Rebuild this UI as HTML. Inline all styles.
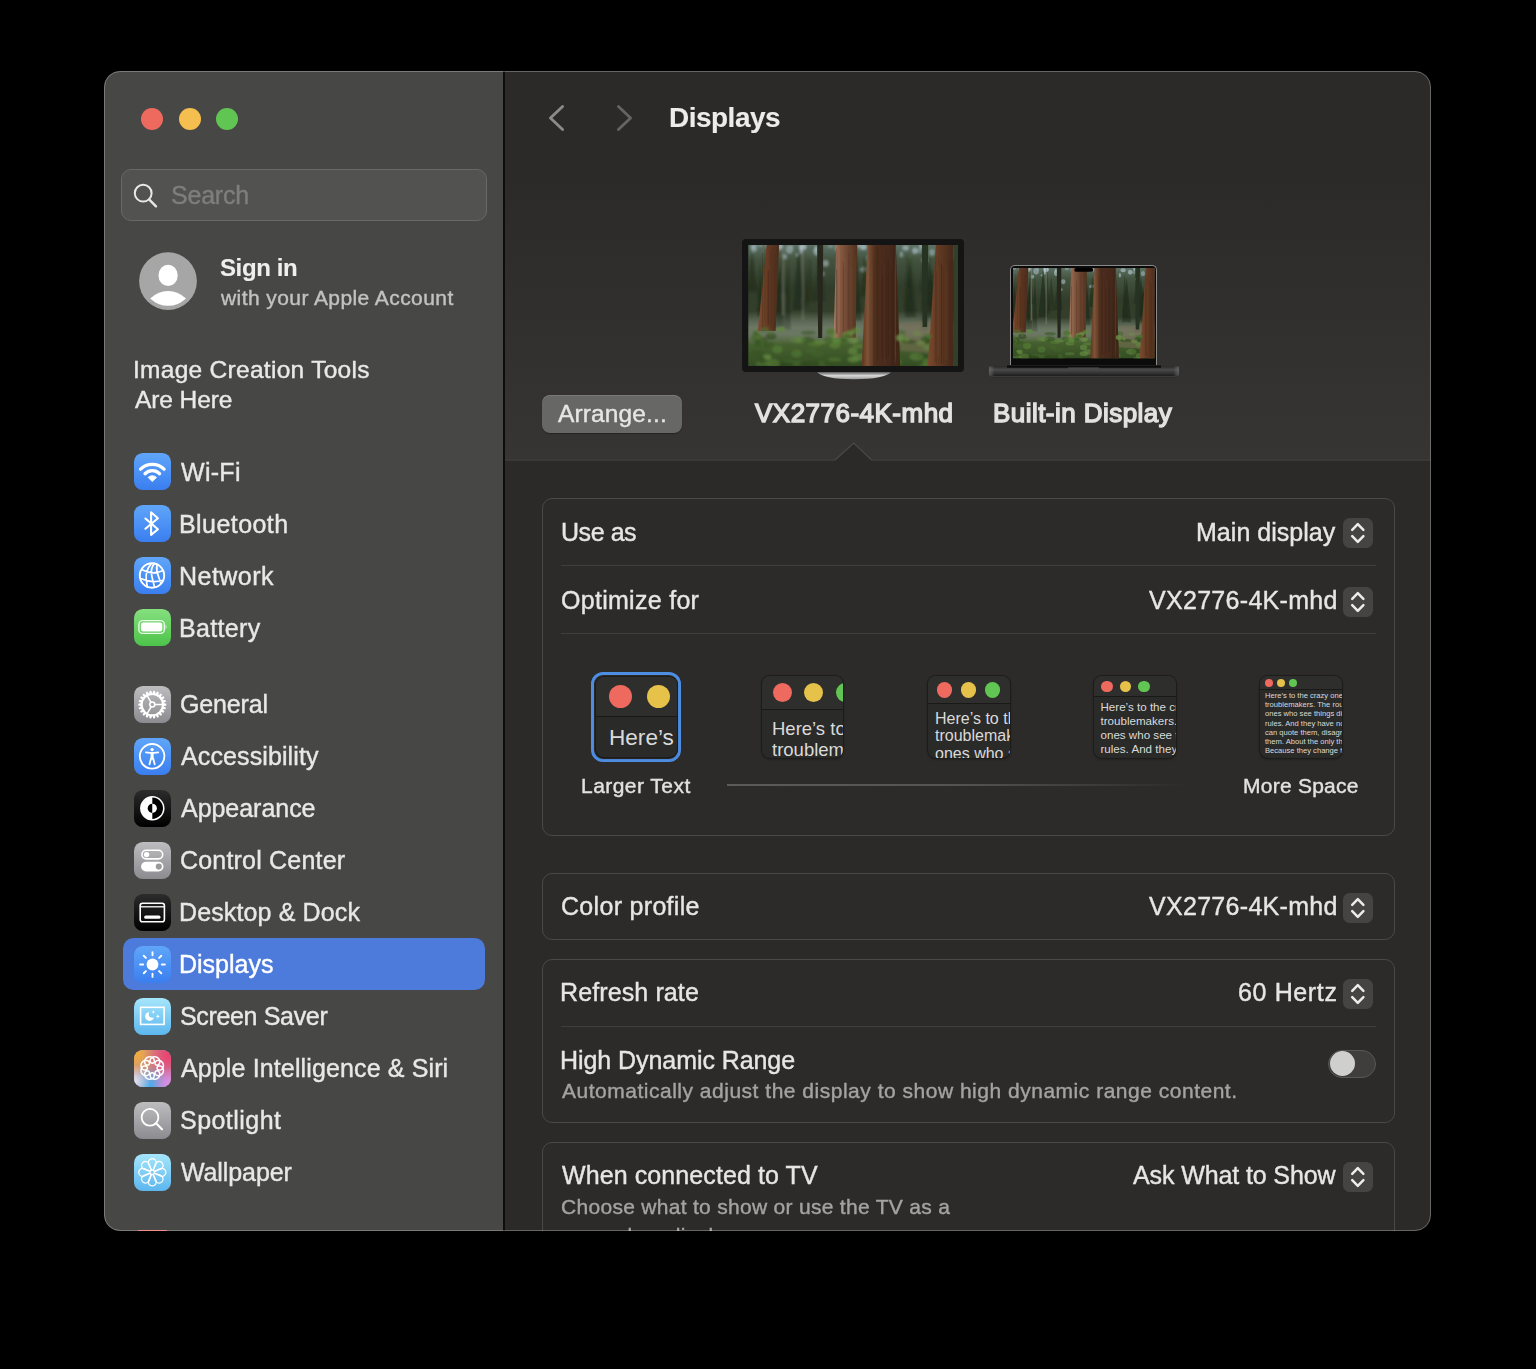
<!DOCTYPE html>
<html><head><meta charset="utf-8"><style>
html,body{margin:0;padding:0;background:#000;width:1536px;height:1369px;overflow:hidden;}
#win{position:absolute;left:0;top:0;width:1536px;height:1369px;clip-path:inset(71px 105px 138px 104px round 16px);}
.t{position:absolute;white-space:nowrap;font-family:'Liberation Sans',sans-serif;will-change:transform;}
svg{display:block}
</style></head><body>
<div id="win"><div style="position:absolute;left:104px;top:71px;width:400px;height:1160px;background:#474745;"></div><div style="position:absolute;left:503px;top:71px;width:2px;height:1160px;background:#0d0d0d;"></div><div style="position:absolute;left:505px;top:71px;width:926px;height:1160px;background:#2b2a28;"></div><div style="position:absolute;left:505px;top:170px;width:926px;height:289px;background:linear-gradient(#2b2a28,#363533);"></div><svg style="position:absolute;left:505px;top:430px" width="926" height="40"><path d="M330.5 30.6 L348.75 13.6 L366 30.6Z" fill="#2b2a28"/><path d="M0 30 H330 L348.75 13 L366.5 30 H926" fill="none" stroke="#4a4947" stroke-width="1.2"/></svg><div style="position:absolute;left:141.2px;top:107.7px;width:22px;height:22px;border-radius:50%;background:#ee6a5f"></div><div style="position:absolute;left:178.6px;top:107.7px;width:22px;height:22px;border-radius:50%;background:#f5bf4f"></div><div style="position:absolute;left:215.7px;top:107.7px;width:22px;height:22px;border-radius:50%;background:#61c554"></div><div style="position:absolute;left:121px;top:169px;width:364px;height:50px;border-radius:10px;background:#525250;border:1px solid #686866;"></div><svg style="position:absolute;left:130px;top:181px" width="30" height="30"><circle cx="13.2" cy="12.2" r="8.4" fill="none" stroke="#e8e8e8" stroke-width="2"/><path d="M19.3 18.6 L26 25.3" stroke="#e8e8e8" stroke-width="2.4" stroke-linecap="round"/></svg><div class="t" style="left:170.80px;top:183.34px;font-size:25px;line-height:25px;color:#7e7e7d;font-weight:400;letter-spacing:-0.222px;-webkit-text-stroke-width:0.4px;">Search</div><svg style="position:absolute;left:139px;top:252px" width="58" height="58"><circle cx="29" cy="29.1" r="28.9" fill="#a6a6a6"/><ellipse cx="29.1" cy="23.4" rx="9.6" ry="10.7" fill="#fff"/><path d="M11.2 46.6 A24.9 24.9 0 0 1 47 46.6 A25.8 25.8 0 0 1 11.2 46.6Z" fill="#fff"/></svg><div class="t" style="left:220.30px;top:255.68px;font-size:24px;line-height:24px;color:#efefef;font-weight:700;letter-spacing:-0.389px;-webkit-text-stroke-width:0.1px;">Sign in</div><div class="t" style="left:221.30px;top:287.22px;font-size:21px;line-height:21px;color:#c2c2c1;font-weight:400;letter-spacing:0.420px;-webkit-text-stroke-width:0.4px;">with your Apple Account</div><div class="t" style="left:132.80px;top:358.06px;font-size:24.5px;line-height:24.5px;color:#e9e9e9;font-weight:400;letter-spacing:0.287px;-webkit-text-stroke-width:0.4px;">Image Creation Tools</div><div class="t" style="left:134.80px;top:388.06px;font-size:24.5px;line-height:24.5px;color:#e9e9e9;font-weight:400;letter-spacing:-0.087px;-webkit-text-stroke-width:0.4px;">Are Here</div><div style="position:absolute;left:122.5px;top:938.3px;width:362.5px;height:51.5px;background:#4d7bdc;border-radius:10.5px;"></div><svg style="position:absolute;left:134px;top:453.0px" width="37" height="37" viewBox="0 0 37 37"><defs><linearGradient id="g1" x1="0" y1="0" x2="0" y2="1"><stop offset="0" stop-color="#5fa6f9"/><stop offset="1" stop-color="#3a7ef0"/></linearGradient></defs><rect x="0" y="0" width="37" height="37" rx="8.8" fill="url(#g1)"/><path d="M6.5 16.2 A16.7 16.7 0 0 1 30.1 16.2" fill="none" stroke="#fff" stroke-linecap="round" stroke-linejoin="round" stroke-width="3.3"/><path d="M11 20.7 A10.4 10.4 0 0 1 25.6 20.7" fill="none" stroke="#fff" stroke-linecap="round" stroke-linejoin="round" stroke-width="3.3"/><path d="M18.3 28.6 L14.1 24.4 A5.9 5.9 0 0 1 22.5 24.4 Z" fill="#fff" stroke="#fff" stroke-width="0.8" stroke-linejoin="round"/></svg><div class="t" style="left:181.20px;top:459.74px;font-size:25px;line-height:25px;color:#e8e8e7;font-weight:400;letter-spacing:0.288px;-webkit-text-stroke-width:0.4px;">Wi-Fi</div><svg style="position:absolute;left:134px;top:505.0px" width="37" height="37" viewBox="0 0 37 37"><defs><linearGradient id="g2" x1="0" y1="0" x2="0" y2="1"><stop offset="0" stop-color="#5fa6f9"/><stop offset="1" stop-color="#3a7ef0"/></linearGradient></defs><rect x="0" y="0" width="37" height="37" rx="8.8" fill="url(#g2)"/><path d="M11.4 13.5 L23.9 24.3 L17.1 29.9 V7.2 L23.9 13.2 L11.4 23.7" fill="none" stroke="#fff" stroke-linecap="round" stroke-linejoin="round" stroke-width="2.1"/></svg><div class="t" style="left:179.20px;top:511.74px;font-size:25px;line-height:25px;color:#e8e8e7;font-weight:400;letter-spacing:0.433px;-webkit-text-stroke-width:0.4px;">Bluetooth</div><svg style="position:absolute;left:134px;top:557.0px" width="37" height="37" viewBox="0 0 37 37"><defs><linearGradient id="g3" x1="0" y1="0" x2="0" y2="1"><stop offset="0" stop-color="#5fa6f9"/><stop offset="1" stop-color="#3a7ef0"/></linearGradient></defs><rect x="0" y="0" width="37" height="37" rx="8.8" fill="url(#g3)"/><circle cx="18" cy="18.5" r="12.2" fill="none" stroke="#fff" stroke-linecap="round" stroke-linejoin="round" stroke-width="1.9"/><path d="M8.1 12.8 Q18.5 18.6 29 13.6 M6.6 21.5 Q18 26.5 28.2 23.5 M17.3 6.6 Q11 14 12.3 22.8 Q12.8 27 13.4 30.2 M20.2 6.5 Q16.6 12 17.5 17.1 Q18.3 22 20.6 30.3 M22.9 7.2 Q22 14 24.9 20.7 Q26 23.5 26.8 26.5" fill="none" stroke="#fff" stroke-linecap="round" stroke-linejoin="round" stroke-width="1.7"/></svg><div class="t" style="left:179.20px;top:563.74px;font-size:25px;line-height:25px;color:#e8e8e7;font-weight:400;letter-spacing:0.469px;-webkit-text-stroke-width:0.4px;">Network</div><svg style="position:absolute;left:134px;top:609.0px" width="37" height="37" viewBox="0 0 37 37"><defs><linearGradient id="g4" x1="0" y1="0" x2="0" y2="1"><stop offset="0" stop-color="#86e07f"/><stop offset="1" stop-color="#4cc349"/></linearGradient></defs><rect x="0" y="0" width="37" height="37" rx="8.8" fill="url(#g4)"/><rect x="4.9" y="11.6" width="25.4" height="12.8" rx="3.6" fill="none" stroke="#fff" stroke-opacity=".85" stroke-width="1.4"/><rect x="6.9" y="13.5" width="21.4" height="9" rx="2.2" fill="#fff"/><path d="M31.6 15.6 Q33.5 18 31.6 20.4Z" fill="#fff" fill-opacity=".85"/></svg><div class="t" style="left:179.20px;top:615.74px;font-size:25px;line-height:25px;color:#e8e8e7;font-weight:400;letter-spacing:0.350px;-webkit-text-stroke-width:0.4px;">Battery</div><svg style="position:absolute;left:134px;top:685.5px" width="37" height="37" viewBox="0 0 37 37"><defs><linearGradient id="g5" x1="0" y1="0" x2="0" y2="1"><stop offset="0" stop-color="#bdbdc0"/><stop offset="1" stop-color="#8c8c90"/></linearGradient></defs><rect x="0" y="0" width="37" height="37" rx="8.8" fill="url(#g5)"/><path d="M29.39 17.01 L32.28 17.80 L32.28 19.40 L29.39 20.19 L29.39 20.20 L31.94 21.77 L31.49 23.30 L28.49 23.25 L28.49 23.25 L30.49 25.48 L29.63 26.83 L26.77 25.93 L26.76 25.94 L28.06 28.64 L26.85 29.69 L24.36 28.02 L24.35 28.02 L24.83 30.98 L23.38 31.65 L21.46 29.35 L21.45 29.35 L21.08 32.32 L19.50 32.55 L18.30 29.80 L18.30 29.80 L17.10 32.55 L15.52 32.32 L15.15 29.35 L15.14 29.35 L13.22 31.65 L11.77 30.98 L12.25 28.02 L12.24 28.02 L9.75 29.69 L8.54 28.64 L9.84 25.94 L9.83 25.93 L6.97 26.83 L6.11 25.48 L8.11 23.25 L8.11 23.25 L5.11 23.30 L4.66 21.77 L7.21 20.20 L7.21 20.19 L4.32 19.40 L4.32 17.80 L7.21 17.01 L7.21 17.00 L4.66 15.43 L5.11 13.90 L8.11 13.95 L8.11 13.95 L6.11 11.72 L6.97 10.37 L9.83 11.27 L9.84 11.26 L8.54 8.56 L9.75 7.51 L12.24 9.18 L12.25 9.18 L11.77 6.22 L13.22 5.55 L15.14 7.85 L15.15 7.85 L15.52 4.88 L17.10 4.65 L18.30 7.40 L18.30 7.40 L19.50 4.65 L21.08 4.88 L21.45 7.85 L21.46 7.85 L23.38 5.55 L24.83 6.22 L24.35 9.18 L24.36 9.18 L26.85 7.51 L28.06 8.56 L26.76 11.26 L26.77 11.27 L29.63 10.37 L30.49 11.72 L28.49 13.95 L28.49 13.95 L31.49 13.90 L31.94 15.43 L29.39 17.00Z M27.90 18.6 A9.6 9.6 0 1 0 8.70 18.6 A9.6 9.6 0 1 0 27.90 18.6Z" fill="#fff" fill-rule="evenodd"/><circle cx="18.3" cy="18.6" r="2.5" fill="none" stroke="#fff" stroke-linecap="round" stroke-linejoin="round" stroke-width="1.5"/><path d="M20.8 18.6 H28.3 M17.05 16.43 L13.3 9.940000000000001 M17.05 20.770000000000003 L13.3 27.26" fill="none" stroke="#fff" stroke-linecap="round" stroke-linejoin="round" stroke-width="1.5"/></svg><div class="t" style="left:180.20px;top:692.24px;font-size:25px;line-height:25px;color:#e8e8e7;font-weight:400;letter-spacing:-0.164px;-webkit-text-stroke-width:0.4px;">General</div><svg style="position:absolute;left:134px;top:737.5px" width="37" height="37" viewBox="0 0 37 37"><defs><linearGradient id="g6" x1="0" y1="0" x2="0" y2="1"><stop offset="0" stop-color="#5fa6f9"/><stop offset="1" stop-color="#3a7ef0"/></linearGradient></defs><rect x="0" y="0" width="37" height="37" rx="8.8" fill="url(#g6)"/><circle cx="18.1" cy="18.3" r="12.3" fill="none" stroke="#fff" stroke-linecap="round" stroke-linejoin="round" stroke-width="1.8"/><circle cx="18.1" cy="11.6" r="1.7" fill="#fff"/><path d="M12 14.4 L18.1 15.2 L24.2 14.4" fill="none" stroke="#fff" stroke-linecap="round" stroke-linejoin="round" stroke-width="1.8"/><path d="M18.1 15.2 V20.2" fill="none" stroke="#fff" stroke-linecap="round" stroke-linejoin="round" stroke-width="3"/><path d="M17 20.5 L15.5 26.3 M19.2 20.5 L20.7 26.3" fill="none" stroke="#fff" stroke-linecap="round" stroke-linejoin="round" stroke-width="1.8"/></svg><div class="t" style="left:181.20px;top:744.24px;font-size:25px;line-height:25px;color:#e8e8e7;font-weight:400;letter-spacing:0.113px;-webkit-text-stroke-width:0.4px;">Accessibility</div><svg style="position:absolute;left:134px;top:789.5px" width="37" height="37" viewBox="0 0 37 37"><defs><linearGradient id="g7" x1="0" y1="0" x2="0" y2="1"><stop offset="0" stop-color="#2c2c2c"/><stop offset="1" stop-color="#000000"/></linearGradient></defs><rect x="0" y="0" width="37" height="37" rx="8.8" fill="url(#g7)"/><circle cx="18.3" cy="18.3" r="12.2" fill="#fff"/><path d="M18.3 7.6 A10.7 10.7 0 0 1 18.3 29 Z" fill="#000"/><path d="M18.3 13.7 A4.6 4.6 0 0 0 18.3 22.9 Z" fill="#000"/><path d="M18.3 13.7 A4.6 4.6 0 0 1 18.3 22.9 Z" fill="#fff"/></svg><div class="t" style="left:181.20px;top:796.24px;font-size:25px;line-height:25px;color:#e8e8e7;font-weight:400;letter-spacing:-0.036px;-webkit-text-stroke-width:0.4px;">Appearance</div><svg style="position:absolute;left:134px;top:841.5px" width="37" height="37" viewBox="0 0 37 37"><defs><linearGradient id="g8" x1="0" y1="0" x2="0" y2="1"><stop offset="0" stop-color="#bdbdc0"/><stop offset="1" stop-color="#8c8c90"/></linearGradient></defs><rect x="0" y="0" width="37" height="37" rx="8.8" fill="url(#g8)"/><rect x="7.9" y="8.3" width="20.8" height="8.6" rx="4.3" fill="none" stroke="#fff" stroke-width="1.6"/><circle cx="12.6" cy="12.6" r="2.7" fill="#fff"/><rect x="7.1" y="19.7" width="22.4" height="9.8" rx="4.9" fill="#fff"/><circle cx="24.8" cy="24.6" r="3.05" fill="#9a9a9c"/></svg><div class="t" style="left:180.20px;top:848.24px;font-size:25px;line-height:25px;color:#e8e8e7;font-weight:400;letter-spacing:0.196px;-webkit-text-stroke-width:0.4px;">Control Center</div><svg style="position:absolute;left:134px;top:893.5px" width="37" height="37" viewBox="0 0 37 37"><defs><linearGradient id="g9" x1="0" y1="0" x2="0" y2="1"><stop offset="0" stop-color="#2c2c2c"/><stop offset="1" stop-color="#000000"/></linearGradient></defs><rect x="0" y="0" width="37" height="37" rx="8.8" fill="url(#g9)"/><rect x="6.2" y="9.3" width="24.2" height="18.4" rx="2.3" fill="none" stroke="#fff" stroke-width="1.6"/><path d="M6.2 12.8 H30.4" stroke="#fff" stroke-width="1.3"/><rect x="10.2" y="21.4" width="16.3" height="3.4" rx="1.5" fill="#fff"/></svg><div class="t" style="left:179.20px;top:900.24px;font-size:25px;line-height:25px;color:#e8e8e7;font-weight:400;letter-spacing:0.128px;-webkit-text-stroke-width:0.4px;">Desktop &amp; Dock</div><svg style="position:absolute;left:134px;top:945.5px" width="37" height="37" viewBox="0 0 37 37"><defs><linearGradient id="g10" x1="0" y1="0" x2="0" y2="1"><stop offset="0" stop-color="#5fa6f9"/><stop offset="1" stop-color="#3a7ef0"/></linearGradient></defs><rect x="0" y="0" width="37" height="37" rx="8.8" fill="url(#g10)"/><circle cx="18.5" cy="18.5" r="5.9" fill="#fff"/><path d="M27.80 18.50 L30.90 18.50 M25.08 25.08 L27.27 27.27 M18.50 27.80 L18.50 30.90 M11.92 25.08 L9.73 27.27 M9.20 18.50 L6.10 18.50 M11.92 11.92 L9.73 9.73 M18.50 9.20 L18.50 6.10 M25.08 11.92 L27.27 9.73 " fill="none" stroke="#fff" stroke-linecap="round" stroke-linejoin="round" stroke-width="1.9"/></svg><div class="t" style="left:179.20px;top:952.24px;font-size:25px;line-height:25px;color:#ffffff;font-weight:400;letter-spacing:-0.010px;-webkit-text-stroke-width:0.4px;">Displays</div><svg style="position:absolute;left:134px;top:997.5px" width="37" height="37" viewBox="0 0 37 37"><defs><linearGradient id="g12" x1="0" y1="0" x2="0" y2="1"><stop offset="0" stop-color="#a6e6fb"/><stop offset="1" stop-color="#5cb6ee"/></linearGradient><mask id="mm11"><rect width="37" height="37" fill="#fff"/><circle cx="18.6" cy="15.9" r="3.9" fill="#000"/></mask></defs><rect x="0" y="0" width="37" height="37" rx="8.8" fill="url(#g12)"/><rect x="6.6" y="9.3" width="23.5" height="17.1" fill="none" stroke="#fff" stroke-width="1.6"/><circle cx="15.6" cy="18.4" r="4.5" fill="#fff" mask="url(#mm11)"/><path d="M19.3 12 L19.8 13.4 L21.2 13.9 L19.8 14.4 L19.3 15.8 L18.8 14.4 L17.4 13.9 L18.8 13.4Z" fill="#fff"/><path d="M23.8 16.2 L24.4 17.7 L25.9 18.3 L24.4 18.9 L23.8 20.4 L23.2 18.9 L21.7 18.3 L23.2 17.7Z" fill="#fff"/></svg><div class="t" style="left:180.20px;top:1004.24px;font-size:25px;line-height:25px;color:#e8e8e7;font-weight:400;letter-spacing:-0.340px;-webkit-text-stroke-width:0.4px;">Screen Saver</div><svg style="position:absolute;left:134px;top:1049.5px" width="37" height="37" viewBox="0 0 37 37"><defs><linearGradient id="g14" x1="0" y1="0" x2="0" y2="1"><stop offset="0" stop-color="#e0a090"/><stop offset="1" stop-color="#b090e0"/></linearGradient><radialGradient id="ai13a" cx="0.05" cy="0.1" r="0.75"><stop offset="0" stop-color="#f5ae35"/><stop offset="1" stop-color="#f5ae35" stop-opacity="0"/></radialGradient><radialGradient id="ai13b" cx="0.95" cy="0.15" r="0.7"><stop offset="0" stop-color="#f23d6b"/><stop offset="1" stop-color="#f23d6b" stop-opacity="0"/></radialGradient><radialGradient id="ai13c" cx="0.4" cy="1" r="0.55"><stop offset="0" stop-color="#3fb0f8"/><stop offset="1" stop-color="#3fb0f8" stop-opacity="0"/></radialGradient><radialGradient id="ai13d" cx="1" cy="0.95" r="0.5"><stop offset="0" stop-color="#e68cf8"/><stop offset="1" stop-color="#e68cf8" stop-opacity="0"/></radialGradient><radialGradient id="ai13e" cx="0" cy="0.85" r="0.45"><stop offset="0" stop-color="#e8e8f0"/><stop offset="1" stop-color="#e8e8f0" stop-opacity="0"/></radialGradient></defs><rect x="0" y="0" width="37" height="37" rx="8.8" fill="url(#g14)"/><rect width="37" height="37" rx="8.8" fill="#b68aa6"/><rect width="37" height="37" rx="8.8" fill="url(#ai13a)"/><rect width="37" height="37" rx="8.8" fill="url(#ai13b)"/><rect width="37" height="37" rx="8.8" fill="url(#ai13c)"/><rect width="37" height="37" rx="8.8" fill="url(#ai13d)"/><rect width="37" height="37" rx="8.8" fill="url(#ai13e)"/><path d="M23.01 18.00 L23.05 17.65 L23.14 17.30 L23.31 16.97 L23.53 16.68 L23.81 16.41 L24.14 16.20 L24.51 16.03 L24.92 15.92 L25.36 15.88 L25.81 15.90 L26.27 15.98 L26.73 16.14 L27.19 16.36 L27.62 16.64 L28.02 16.99 L28.38 17.40 L28.70 17.86 L28.97 18.37 L29.17 18.91 L29.32 19.49 L29.39 20.08 L29.40 20.69 L29.33 21.29 L29.20 21.89 L29.00 22.47 L28.73 23.03 L28.40 23.54 L28.02 24.02 L27.59 24.44 L27.11 24.81 L26.60 25.11 L26.07 25.35 L25.53 25.52 L24.98 25.62 L24.43 25.65 L23.90 25.62 L23.39 25.52 L22.92 25.35 L22.48 25.14 L22.09 24.87 L21.76 24.56 L21.48 24.22 L21.27 23.86 L21.13 23.47 L21.05 23.09 L21.03 22.71 L21.09 22.34 L21.20 21.99 L21.38 21.68 L21.60 21.40 L21.88 21.18 L22.19 21.00 L22.54 20.89 L22.91 20.83 L23.29 20.85 L23.67 20.93 L24.06 21.07 L24.42 21.28 L24.76 21.56 L25.07 21.89 L25.34 22.28 L25.55 22.72 L25.72 23.19 L25.82 23.70 L25.85 24.23 L25.82 24.78 L25.72 25.33 L25.55 25.87 L25.31 26.40 L25.01 26.91 L24.64 27.39 L24.22 27.82 L23.74 28.20 L23.23 28.53 L22.67 28.80 L22.09 29.00 L21.49 29.13 L20.89 29.20 L20.28 29.19 L19.69 29.12 L19.11 28.97 L18.57 28.77 L18.06 28.50 L17.60 28.18 L17.19 27.82 L16.84 27.42 L16.56 26.99 L16.34 26.53 L16.18 26.07 L16.10 25.61 L16.08 25.16 L16.12 24.72 L16.23 24.31 L16.40 23.94 L16.61 23.61 L16.88 23.33 L17.17 23.11 L17.50 22.94 L17.85 22.85 L18.20 22.81 L18.55 22.85 L18.90 22.94 L19.23 23.11 L19.52 23.33 L19.79 23.61 L20.00 23.94 L20.17 24.31 L20.28 24.72 L20.32 25.16 L20.30 25.61 L20.22 26.07 L20.06 26.53 L19.84 26.99 L19.56 27.42 L19.21 27.82 L18.80 28.18 L18.34 28.50 L17.83 28.77 L17.29 28.97 L16.71 29.12 L16.12 29.19 L15.51 29.20 L14.91 29.13 L14.31 29.00 L13.73 28.80 L13.17 28.53 L12.66 28.20 L12.18 27.82 L11.76 27.39 L11.39 26.91 L11.09 26.40 L10.85 25.87 L10.68 25.33 L10.58 24.78 L10.55 24.23 L10.58 23.70 L10.68 23.19 L10.85 22.72 L11.06 22.28 L11.33 21.89 L11.64 21.56 L11.98 21.28 L12.34 21.07 L12.73 20.93 L13.11 20.85 L13.49 20.83 L13.86 20.89 L14.21 21.00 L14.52 21.18 L14.80 21.40 L15.02 21.68 L15.20 21.99 L15.31 22.34 L15.37 22.71 L15.35 23.09 L15.27 23.47 L15.13 23.86 L14.92 24.22 L14.64 24.56 L14.31 24.87 L13.92 25.14 L13.48 25.35 L13.01 25.52 L12.50 25.62 L11.97 25.65 L11.42 25.62 L10.87 25.52 L10.33 25.35 L9.80 25.11 L9.29 24.81 L8.81 24.44 L8.38 24.02 L8.00 23.54 L7.67 23.03 L7.40 22.47 L7.20 21.89 L7.07 21.29 L7.00 20.69 L7.01 20.08 L7.08 19.49 L7.23 18.91 L7.43 18.37 L7.70 17.86 L8.02 17.40 L8.38 16.99 L8.78 16.64 L9.21 16.36 L9.67 16.14 L10.13 15.98 L10.59 15.90 L11.04 15.88 L11.48 15.92 L11.89 16.03 L12.26 16.20 L12.59 16.41 L12.87 16.68 L13.09 16.97 L13.26 17.30 L13.35 17.65 L13.39 18.00 L13.35 18.35 L13.26 18.70 L13.09 19.03 L12.87 19.32 L12.59 19.59 L12.26 19.80 L11.89 19.97 L11.48 20.08 L11.04 20.12 L10.59 20.10 L10.13 20.02 L9.67 19.86 L9.21 19.64 L8.78 19.36 L8.38 19.01 L8.02 18.60 L7.70 18.14 L7.43 17.63 L7.23 17.09 L7.08 16.51 L7.01 15.92 L7.00 15.31 L7.07 14.71 L7.20 14.11 L7.40 13.53 L7.67 12.97 L8.00 12.46 L8.38 11.98 L8.81 11.56 L9.29 11.19 L9.80 10.89 L10.33 10.65 L10.87 10.48 L11.42 10.38 L11.97 10.35 L12.50 10.38 L13.01 10.48 L13.48 10.65 L13.92 10.86 L14.31 11.13 L14.64 11.44 L14.92 11.78 L15.13 12.14 L15.27 12.53 L15.35 12.91 L15.37 13.29 L15.31 13.66 L15.20 14.01 L15.02 14.32 L14.80 14.60 L14.52 14.82 L14.21 15.00 L13.86 15.11 L13.49 15.17 L13.11 15.15 L12.73 15.07 L12.34 14.93 L11.98 14.72 L11.64 14.44 L11.33 14.11 L11.06 13.72 L10.85 13.28 L10.68 12.81 L10.58 12.30 L10.55 11.77 L10.58 11.22 L10.68 10.67 L10.85 10.13 L11.09 9.60 L11.39 9.09 L11.76 8.61 L12.18 8.18 L12.66 7.80 L13.17 7.47 L13.73 7.20 L14.31 7.00 L14.91 6.87 L15.51 6.80 L16.12 6.81 L16.71 6.88 L17.29 7.03 L17.83 7.23 L18.34 7.50 L18.80 7.82 L19.21 8.18 L19.56 8.58 L19.84 9.01 L20.06 9.47 L20.22 9.93 L20.30 10.39 L20.32 10.84 L20.28 11.28 L20.17 11.69 L20.00 12.06 L19.79 12.39 L19.52 12.67 L19.23 12.89 L18.90 13.06 L18.55 13.15 L18.20 13.19 L17.85 13.15 L17.50 13.06 L17.17 12.89 L16.88 12.67 L16.61 12.39 L16.40 12.06 L16.23 11.69 L16.12 11.28 L16.08 10.84 L16.10 10.39 L16.18 9.93 L16.34 9.47 L16.56 9.01 L16.84 8.58 L17.19 8.18 L17.60 7.82 L18.06 7.50 L18.57 7.23 L19.11 7.03 L19.69 6.88 L20.28 6.81 L20.89 6.80 L21.49 6.87 L22.09 7.00 L22.67 7.20 L23.23 7.47 L23.74 7.80 L24.22 8.18 L24.64 8.61 L25.01 9.09 L25.31 9.60 L25.55 10.13 L25.72 10.67 L25.82 11.22 L25.85 11.77 L25.82 12.30 L25.72 12.81 L25.55 13.28 L25.34 13.72 L25.07 14.11 L24.76 14.44 L24.42 14.72 L24.06 14.93 L23.67 15.07 L23.29 15.15 L22.91 15.17 L22.54 15.11 L22.19 15.00 L21.88 14.82 L21.60 14.60 L21.38 14.32 L21.20 14.01 L21.09 13.66 L21.03 13.29 L21.05 12.91 L21.13 12.53 L21.27 12.14 L21.48 11.78 L21.76 11.44 L22.09 11.13 L22.48 10.86 L22.92 10.65 L23.39 10.48 L23.90 10.38 L24.43 10.35 L24.98 10.38 L25.53 10.48 L26.07 10.65 L26.60 10.89 L27.11 11.19 L27.59 11.56 L28.02 11.98 L28.40 12.46 L28.73 12.97 L29.00 13.53 L29.20 14.11 L29.33 14.71 L29.40 15.31 L29.39 15.92 L29.32 16.51 L29.17 17.09 L28.97 17.63 L28.70 18.14 L28.38 18.60 L28.02 19.01 L27.62 19.36 L27.19 19.64 L26.73 19.86 L26.27 20.02 L25.81 20.10 L25.36 20.12 L24.92 20.08 L24.51 19.97 L24.14 19.80 L23.81 19.59 L23.53 19.32 L23.31 19.03 L23.14 18.70 L23.05 18.35 L23.01 18.00Z" fill="none" stroke="#fff" stroke-width="1.5" stroke-linejoin="round"/></svg><div class="t" style="left:181.20px;top:1056.24px;font-size:25px;line-height:25px;color:#e8e8e7;font-weight:400;letter-spacing:0.130px;-webkit-text-stroke-width:0.4px;">Apple Intelligence &amp; Siri</div><svg style="position:absolute;left:134px;top:1101.5px" width="37" height="37" viewBox="0 0 37 37"><defs><linearGradient id="g15" x1="0" y1="0" x2="0" y2="1"><stop offset="0" stop-color="#bdbdc0"/><stop offset="1" stop-color="#8c8c90"/></linearGradient></defs><rect x="0" y="0" width="37" height="37" rx="8.8" fill="url(#g15)"/><circle cx="16" cy="15.3" r="8.4" fill="none" stroke="#fff" stroke-linecap="round" stroke-linejoin="round" stroke-width="1.8"/><path d="M22 21.3 L28 27.3" fill="none" stroke="#fff" stroke-linecap="round" stroke-linejoin="round" stroke-width="2.1"/></svg><div class="t" style="left:180.20px;top:1108.24px;font-size:25px;line-height:25px;color:#e8e8e7;font-weight:400;letter-spacing:0.457px;-webkit-text-stroke-width:0.4px;">Spotlight</div><svg style="position:absolute;left:134px;top:1153.5px" width="37" height="37" viewBox="0 0 37 37"><defs><linearGradient id="g16" x1="0" y1="0" x2="0" y2="1"><stop offset="0" stop-color="#a6e6fb"/><stop offset="1" stop-color="#5cb6ee"/></linearGradient></defs><rect x="0" y="0" width="37" height="37" rx="8.8" fill="url(#g16)"/><path d="M18.3 18.3 L14.67 10.36 A4 4 0 1 1 21.93 10.36 Z" transform="rotate(0.0 18.3 18.3)" fill="none" stroke="#fff" stroke-width="1.25" stroke-linejoin="round"/><path d="M18.3 18.3 L14.67 10.36 A4 4 0 1 1 21.93 10.36 Z" transform="rotate(45.0 18.3 18.3)" fill="none" stroke="#fff" stroke-width="1.25" stroke-linejoin="round"/><path d="M18.3 18.3 L14.67 10.36 A4 4 0 1 1 21.93 10.36 Z" transform="rotate(90.0 18.3 18.3)" fill="none" stroke="#fff" stroke-width="1.25" stroke-linejoin="round"/><path d="M18.3 18.3 L14.67 10.36 A4 4 0 1 1 21.93 10.36 Z" transform="rotate(135.0 18.3 18.3)" fill="none" stroke="#fff" stroke-width="1.25" stroke-linejoin="round"/><path d="M18.3 18.3 L14.67 10.36 A4 4 0 1 1 21.93 10.36 Z" transform="rotate(180.0 18.3 18.3)" fill="none" stroke="#fff" stroke-width="1.25" stroke-linejoin="round"/><path d="M18.3 18.3 L14.67 10.36 A4 4 0 1 1 21.93 10.36 Z" transform="rotate(225.0 18.3 18.3)" fill="none" stroke="#fff" stroke-width="1.25" stroke-linejoin="round"/><path d="M18.3 18.3 L14.67 10.36 A4 4 0 1 1 21.93 10.36 Z" transform="rotate(270.0 18.3 18.3)" fill="none" stroke="#fff" stroke-width="1.25" stroke-linejoin="round"/><path d="M18.3 18.3 L14.67 10.36 A4 4 0 1 1 21.93 10.36 Z" transform="rotate(315.0 18.3 18.3)" fill="none" stroke="#fff" stroke-width="1.25" stroke-linejoin="round"/><circle cx="18.3" cy="18.3" r="2.2" fill="#7cc6f2" stroke="#fff" stroke-width="1.3"/></svg><div class="t" style="left:181.20px;top:1160.24px;font-size:25px;line-height:25px;color:#e8e8e7;font-weight:400;letter-spacing:-0.099px;-webkit-text-stroke-width:0.4px;">Wallpaper</div><svg style="position:absolute;left:540px;top:98px" width="100" height="40"><path d="M22.6 8.4 L10.4 20 L22.6 31.6" fill="none" stroke="#8b8b8a" stroke-width="2.8" stroke-linecap="round" stroke-linejoin="round"/><path d="M78.4 8.4 L90.6 20 L78.4 31.6" fill="none" stroke="#646463" stroke-width="2.8" stroke-linecap="round" stroke-linejoin="round"/></svg><div class="t" style="left:669.00px;top:104.10px;font-size:28px;line-height:28px;color:#ececeb;font-weight:700;letter-spacing:-0.514px;-webkit-text-stroke-width:0.1px;">Displays</div><svg style="position:absolute;left:0;top:0" width="0" height="0"><symbol id="forest" viewBox="0 0 210 121" overflow="hidden"><defs><filter id="fblur" x="-5%" y="-5%" width="110%" height="110%"><feGaussianBlur stdDeviation="1"/></filter><filter id="fblur2"><feGaussianBlur stdDeviation="0.4"/></filter><linearGradient id="fbg" x1="0" y1="0" x2="0" y2="1"><stop offset="0" stop-color="#5c7064"/><stop offset="0.12" stop-color="#43533f"/><stop offset="0.35" stop-color="#313d2a"/><stop offset="0.55" stop-color="#333f2a"/><stop offset="0.64" stop-color="#4c5944"/><stop offset="0.74" stop-color="#5e6b52"/><stop offset="0.82" stop-color="#46602f"/><stop offset="1" stop-color="#344e24"/></linearGradient><linearGradient id="trkA" x1="0" y1="0" x2="1" y2="0"><stop offset="0" stop-color="#7e4c32"/><stop offset="0.4" stop-color="#683c26"/><stop offset="1" stop-color="#4a2c1c"/></linearGradient><linearGradient id="trkC" x1="0" y1="0" x2="1" y2="0"><stop offset="0" stop-color="#5a3522"/><stop offset="0.15" stop-color="#7e5236"/><stop offset="0.35" stop-color="#4e2e1e"/><stop offset="1" stop-color="#3e2618"/></linearGradient><linearGradient id="trkB" x1="0" y1="0" x2="1" y2="0"><stop offset="0" stop-color="#a88068"/><stop offset="0.3" stop-color="#845840"/><stop offset="1" stop-color="#50301e"/></linearGradient><linearGradient id="trkD" x1="0" y1="0" x2="1" y2="0"><stop offset="0" stop-color="#7a4a2e"/><stop offset="0.5" stop-color="#5e3722"/><stop offset="1" stop-color="#43281a"/></linearGradient><linearGradient id="mist" x1="0" y1="0" x2="0" y2="1"><stop offset="0" stop-color="#8a9688" stop-opacity="0"/><stop offset="0.5" stop-color="#8a9688" stop-opacity=".45"/><stop offset="1" stop-color="#8a9688" stop-opacity="0"/></linearGradient></defs><rect width="210" height="121" fill="url(#fbg)"/><g filter="url(#fblur)"><ellipse cx="68.0" cy="3.3" rx="1.4" ry="3.4" fill="#c0d4de" opacity="0.41"/><ellipse cx="12.2" cy="0.6" rx="2.4" ry="1.7" fill="#c0d4de" opacity="0.33"/><ellipse cx="89.1" cy="3.5" rx="1.8" ry="3.7" fill="#c0d4de" opacity="0.58"/><ellipse cx="121.2" cy="13.2" rx="1.3" ry="4.5" fill="#c0d4de" opacity="0.39"/><ellipse cx="30.3" cy="1.2" rx="3.5" ry="2.1" fill="#c0d4de" opacity="0.47"/><ellipse cx="134.2" cy="6.9" rx="1.4" ry="1.7" fill="#c0d4de" opacity="0.36"/><ellipse cx="142.9" cy="4.6" rx="2.8" ry="3.1" fill="#c0d4de" opacity="0.39"/><ellipse cx="166.8" cy="5.8" rx="2.8" ry="3.3" fill="#c0d4de" opacity="0.56"/><ellipse cx="153.2" cy="9.6" rx="1.5" ry="3.0" fill="#c0d4de" opacity="0.53"/><ellipse cx="31.9" cy="0.7" rx="3.1" ry="4.2" fill="#c0d4de" opacity="0.47"/><ellipse cx="183.9" cy="7.4" rx="2.9" ry="3.5" fill="#c0d4de" opacity="0.44"/><ellipse cx="176.4" cy="15.2" rx="3.1" ry="1.7" fill="#c0d4de" opacity="0.51"/><ellipse cx="135.9" cy="27.8" rx="2.0" ry="2.9" fill="#c0d4de" opacity="0.50"/><ellipse cx="4.7" cy="2.6" rx="1.5" ry="1.7" fill="#c0d4de" opacity="0.53"/><ellipse cx="27.2" cy="3.3" rx="3.6" ry="1.8" fill="#c0d4de" opacity="0.43"/><ellipse cx="115.4" cy="24.6" rx="3.6" ry="2.5" fill="#c0d4de" opacity="0.42"/><ellipse cx="75.3" cy="28.8" rx="1.6" ry="2.1" fill="#c0d4de" opacity="0.37"/><ellipse cx="49.0" cy="9.7" rx="1.9" ry="1.5" fill="#c0d4de" opacity="0.43"/><ellipse cx="77.5" cy="18.4" rx="3.1" ry="3.3" fill="#c0d4de" opacity="0.49"/><ellipse cx="142.0" cy="1.7" rx="3.4" ry="4.6" fill="#c0d4de" opacity="0.54"/><ellipse cx="82.4" cy="1.4" rx="3.0" ry="1.7" fill="#c0d4de" opacity="0.32"/><ellipse cx="43.8" cy="1.9" rx="1.3" ry="1.5" fill="#c0d4de" opacity="0.35"/><ellipse cx="21.3" cy="0.3" rx="3.6" ry="3.6" fill="#c0d4de" opacity="0.34"/><ellipse cx="53.0" cy="4.3" rx="1.5" ry="4.5" fill="#c0d4de" opacity="0.60"/><ellipse cx="97.9" cy="1.4" rx="1.5" ry="2.7" fill="#c0d4de" opacity="0.38"/><ellipse cx="174.1" cy="0.1" rx="3.9" ry="3.3" fill="#c0d4de" opacity="0.34"/><ellipse cx="114.1" cy="0.5" rx="3.9" ry="4.5" fill="#c0d4de" opacity="0.51"/><ellipse cx="54.8" cy="2.1" rx="3.4" ry="3.4" fill="#c0d4de" opacity="0.53"/><ellipse cx="69.2" cy="6.2" rx="4.0" ry="4.5" fill="#c0d4de" opacity="0.54"/><ellipse cx="171.8" cy="5.7" rx="2.6" ry="2.7" fill="#c0d4de" opacity="0.31"/><ellipse cx="5.9" cy="2.5" rx="3.1" ry="4.8" fill="#c0d4de" opacity="0.43"/><ellipse cx="196.8" cy="32.1" rx="2.2" ry="2.3" fill="#c0d4de" opacity="0.37"/><ellipse cx="41.3" cy="4.3" rx="3.7" ry="4.4" fill="#c0d4de" opacity="0.44"/><ellipse cx="137.1" cy="2.3" rx="3.0" ry="4.7" fill="#c0d4de" opacity="0.53"/><ellipse cx="157.5" cy="2.9" rx="3.4" ry="2.7" fill="#c0d4de" opacity="0.54"/><ellipse cx="204.0" cy="5.4" rx="3.9" ry="4.0" fill="#c0d4de" opacity="0.35"/><ellipse cx="26.7" cy="4.7" rx="3.5" ry="2.0" fill="#c0d4de" opacity="0.55"/><ellipse cx="205.9" cy="7.8" rx="2.7" ry="2.0" fill="#c0d4de" opacity="0.30"/><ellipse cx="203.9" cy="11.6" rx="3.8" ry="3.0" fill="#c0d4de" opacity="0.56"/><ellipse cx="173.5" cy="1.8" rx="2.0" ry="2.3" fill="#c0d4de" opacity="0.48"/><ellipse cx="54.5" cy="1.9" rx="3.7" ry="2.7" fill="#c0d4de" opacity="0.44"/><ellipse cx="122.5" cy="12.9" rx="3.8" ry="3.3" fill="#c0d4de" opacity="0.46"/><ellipse cx="109.9" cy="0.3" rx="1.7" ry="1.5" fill="#c0d4de" opacity="0.54"/><ellipse cx="36.2" cy="11.7" rx="2.8" ry="2.6" fill="#c0d4de" opacity="0.46"/><ellipse cx="116.6" cy="2.8" rx="2.8" ry="2.4" fill="#c0d4de" opacity="0.38"/><path d="M162.2 12.7 L168.2 72.4 L156.1 72.4Z" fill="#1e2a18" opacity="0.67"/><path d="M93.1 15.3 L98.1 73.0 L88.0 73.0Z" fill="#1e2a18" opacity="0.61"/><path d="M95.0 13.3 L101.8 70.1 L88.2 70.1Z" fill="#1e2a18" opacity="0.61"/><path d="M184.1 23.6 L189.3 72.6 L178.8 72.6Z" fill="#1e2a18" opacity="0.68"/><path d="M176.4 3.4 L181.2 47.7 L171.6 47.7Z" fill="#1e2a18" opacity="0.42"/><path d="M50.5 1.8 L56.7 65.3 L44.4 65.3Z" fill="#1e2a18" opacity="0.67"/><path d="M32.4 17.9 L36.0 81.0 L28.9 81.0Z" fill="#1e2a18" opacity="0.66"/><path d="M203.2 5.5 L207.8 78.8 L198.6 78.8Z" fill="#1e2a18" opacity="0.55"/><path d="M207.9 20.8 L212.6 66.5 L203.1 66.5Z" fill="#1e2a18" opacity="0.55"/><path d="M71.2 4.9 L77.1 56.0 L65.3 56.0Z" fill="#1e2a18" opacity="0.41"/><path d="M116.4 11.0 L120.7 51.6 L112.0 51.6Z" fill="#1e2a18" opacity="0.59"/><path d="M107.6 1.6 L113.7 76.1 L101.4 76.1Z" fill="#1e2a18" opacity="0.69"/><path d="M22.0 6.6 L28.1 48.0 L15.9 48.0Z" fill="#1e2a18" opacity="0.48"/><path d="M27.2 10.6 L33.5 82.5 L20.9 82.5Z" fill="#1e2a18" opacity="0.48"/><path d="M31.4 23.0 L37.2 83.0 L25.6 83.0Z" fill="#1e2a18" opacity="0.43"/><path d="M12.1 17.2 L15.4 72.1 L8.8 72.1Z" fill="#1e2a18" opacity="0.68"/><path d="M133.2 20.0 L139.7 63.0 L126.8 63.0Z" fill="#1e2a18" opacity="0.42"/><path d="M181.2 11.3 L186.4 63.2 L176.0 63.2Z" fill="#1e2a18" opacity="0.68"/><path d="M56.3 3.2 L60.2 61.7 L52.3 61.7Z" fill="#1e2a18" opacity="0.43"/><path d="M33.9 1.3 L38.2 48.3 L29.7 48.3Z" fill="#1e2a18" opacity="0.49"/><path d="M159.5 7.2 L163.2 64.8 L155.8 64.8Z" fill="#1e2a18" opacity="0.50"/><path d="M3.8 6.3 L9.7 46.8 L-2.1 46.8Z" fill="#1e2a18" opacity="0.57"/><path d="M39.8 11.9 L43.2 84.6 L36.4 84.6Z" fill="#1e2a18" opacity="0.65"/><path d="M90.8 12.4 L95.3 81.6 L86.2 81.6Z" fill="#1e2a18" opacity="0.55"/><path d="M144.4 24.6 L150.8 76.6 L138.1 76.6Z" fill="#1e2a18" opacity="0.61"/><path d="M133.6 10.1 L136.8 62.3 L130.3 62.3Z" fill="#1e2a18" opacity="0.44"/><path d="M14.9 18.5 L18.5 67.5 L11.2 67.5Z" fill="#1e2a18" opacity="0.43"/><path d="M176.7 21.8 L180.8 85.2 L172.5 85.2Z" fill="#1e2a18" opacity="0.47"/><path d="M61.5 11.5 L66.3 57.0 L56.8 57.0Z" fill="#1e2a18" opacity="0.48"/><path d="M202.0 24.3 L206.0 83.5 L198.0 83.5Z" fill="#1e2a18" opacity="0.69"/><path d="M34 0 h2 v70 h-2z M54 0 h1.6 v75 h-1.6z" fill="#8a8a7a" opacity=".5"/><rect x="0" y="66" width="210" height="34" fill="url(#mist)"/><path d="M152 78 L182 76 L182 108 L152 106Z" fill="#7b6d55" opacity=".5"/><ellipse cx="65.0" cy="98.5" rx="3.0" ry="3.0" fill="#34521f" opacity="0.45"/><ellipse cx="137.8" cy="94.7" rx="6.9" ry="2.2" fill="#567e34" opacity="0.40"/><ellipse cx="123.2" cy="99.8" rx="4.5" ry="3.6" fill="#567e34" opacity="0.55"/><ellipse cx="111.1" cy="112.3" rx="6.3" ry="3.8" fill="#6a9445" opacity="0.49"/><ellipse cx="68.5" cy="120.5" rx="3.7" ry="3.8" fill="#2c4419" opacity="0.40"/><ellipse cx="173.2" cy="111.0" rx="5.6" ry="3.1" fill="#2c4419" opacity="0.63"/><ellipse cx="29.3" cy="104.3" rx="5.5" ry="4.1" fill="#567e34" opacity="0.64"/><ellipse cx="122.7" cy="117.2" rx="6.4" ry="3.7" fill="#44682c" opacity="0.38"/><ellipse cx="8.8" cy="108.3" rx="7.8" ry="2.9" fill="#34521f" opacity="0.55"/><ellipse cx="131.8" cy="107.9" rx="6.4" ry="3.2" fill="#567e34" opacity="0.51"/><ellipse cx="14.7" cy="118.6" rx="7.5" ry="2.2" fill="#6a9445" opacity="0.37"/><ellipse cx="154.7" cy="94.8" rx="3.4" ry="2.7" fill="#2c4419" opacity="0.61"/><ellipse cx="48.5" cy="108.7" rx="5.3" ry="4.1" fill="#567e34" opacity="0.52"/><ellipse cx="143.6" cy="112.8" rx="6.1" ry="3.6" fill="#567e34" opacity="0.56"/><ellipse cx="69.7" cy="108.8" rx="6.5" ry="3.6" fill="#44682c" opacity="0.35"/><ellipse cx="12.7" cy="95.4" rx="6.4" ry="3.7" fill="#2c4419" opacity="0.52"/><ellipse cx="148.9" cy="96.0" rx="5.3" ry="3.9" fill="#6a9445" opacity="0.42"/><ellipse cx="205.4" cy="118.8" rx="3.1" ry="3.1" fill="#6a9445" opacity="0.69"/><ellipse cx="94.4" cy="95.4" rx="4.0" ry="4.4" fill="#44682c" opacity="0.38"/><ellipse cx="19.0" cy="112.2" rx="4.3" ry="2.9" fill="#6a9445" opacity="0.64"/><ellipse cx="106.8" cy="117.0" rx="6.5" ry="2.6" fill="#34521f" opacity="0.49"/><ellipse cx="33.4" cy="119.2" rx="6.4" ry="3.0" fill="#2c4419" opacity="0.40"/><ellipse cx="72.2" cy="97.1" rx="7.2" ry="2.0" fill="#62893e" opacity="0.64"/><ellipse cx="25.2" cy="118.4" rx="6.6" ry="4.3" fill="#62893e" opacity="0.44"/><ellipse cx="13.6" cy="99.7" rx="7.3" ry="2.2" fill="#34521f" opacity="0.61"/><ellipse cx="179.4" cy="95.8" rx="3.3" ry="3.7" fill="#2c4419" opacity="0.68"/><ellipse cx="52.4" cy="95.3" rx="5.6" ry="2.5" fill="#62893e" opacity="0.62"/><ellipse cx="89.8" cy="87.0" rx="6.8" ry="3.0" fill="#6a9445" opacity="0.54"/><ellipse cx="151.1" cy="87.7" rx="6.7" ry="3.1" fill="#44682c" opacity="0.58"/><ellipse cx="60.1" cy="87.7" rx="7.6" ry="2.3" fill="#34521f" opacity="0.50"/><ellipse cx="59.2" cy="95.0" rx="6.7" ry="3.6" fill="#34521f" opacity="0.58"/><ellipse cx="63.2" cy="105.5" rx="5.0" ry="2.4" fill="#44682c" opacity="0.38"/><ellipse cx="105.1" cy="114.4" rx="5.8" ry="3.1" fill="#62893e" opacity="0.70"/><ellipse cx="94.5" cy="90.9" rx="4.0" ry="2.2" fill="#62893e" opacity="0.54"/><ellipse cx="67.1" cy="98.9" rx="7.0" ry="2.5" fill="#567e34" opacity="0.61"/><ellipse cx="86.7" cy="100.5" rx="5.6" ry="2.9" fill="#62893e" opacity="0.61"/><ellipse cx="104.6" cy="106.1" rx="4.8" ry="3.7" fill="#6a9445" opacity="0.57"/><ellipse cx="181.2" cy="93.6" rx="4.4" ry="2.6" fill="#34521f" opacity="0.58"/><ellipse cx="90.7" cy="96.9" rx="7.1" ry="4.4" fill="#44682c" opacity="0.36"/><ellipse cx="149.0" cy="117.3" rx="5.4" ry="3.5" fill="#567e34" opacity="0.38"/><ellipse cx="195.4" cy="118.5" rx="5.6" ry="3.2" fill="#34521f" opacity="0.44"/><ellipse cx="22.9" cy="91.4" rx="5.6" ry="3.7" fill="#2c4419" opacity="0.60"/><ellipse cx="177.8" cy="117.3" rx="3.4" ry="3.9" fill="#567e34" opacity="0.62"/><ellipse cx="48.8" cy="118.2" rx="6.2" ry="2.8" fill="#44682c" opacity="0.57"/><ellipse cx="110.9" cy="101.3" rx="6.8" ry="2.2" fill="#62893e" opacity="0.53"/><ellipse cx="122.4" cy="99.6" rx="4.1" ry="3.5" fill="#567e34" opacity="0.54"/><ellipse cx="209.2" cy="95.8" rx="4.6" ry="4.1" fill="#44682c" opacity="0.52"/><ellipse cx="49.3" cy="94.6" rx="7.8" ry="3.8" fill="#62893e" opacity="0.37"/><ellipse cx="40.8" cy="117.0" rx="6.2" ry="2.2" fill="#44682c" opacity="0.58"/><ellipse cx="194.3" cy="93.9" rx="3.2" ry="2.8" fill="#34521f" opacity="0.48"/><ellipse cx="83.2" cy="86.2" rx="4.5" ry="4.1" fill="#567e34" opacity="0.42"/><ellipse cx="203.7" cy="96.9" rx="7.1" ry="2.6" fill="#44682c" opacity="0.44"/><ellipse cx="186.8" cy="89.8" rx="6.1" ry="3.5" fill="#44682c" opacity="0.52"/><ellipse cx="191.2" cy="88.0" rx="6.0" ry="4.3" fill="#567e34" opacity="0.42"/><ellipse cx="204.6" cy="91.0" rx="3.3" ry="2.2" fill="#34521f" opacity="0.51"/><ellipse cx="149.5" cy="97.0" rx="3.6" ry="2.2" fill="#44682c" opacity="0.47"/><ellipse cx="39.0" cy="118.8" rx="6.7" ry="2.1" fill="#2c4419" opacity="0.60"/><ellipse cx="176.2" cy="120.5" rx="5.2" ry="2.3" fill="#567e34" opacity="0.45"/><ellipse cx="73.8" cy="119.4" rx="3.6" ry="4.4" fill="#44682c" opacity="0.48"/><ellipse cx="161.4" cy="96.8" rx="7.0" ry="2.2" fill="#2c4419" opacity="0.52"/><ellipse cx="78.3" cy="118.2" rx="4.0" ry="2.9" fill="#34521f" opacity="0.36"/><ellipse cx="86.3" cy="114.4" rx="6.8" ry="2.1" fill="#567e34" opacity="0.51"/><ellipse cx="168.7" cy="88.2" rx="4.0" ry="2.2" fill="#6a9445" opacity="0.47"/><ellipse cx="57.2" cy="119.5" rx="6.1" ry="2.7" fill="#2c4419" opacity="0.59"/><ellipse cx="194.1" cy="96.4" rx="6.6" ry="3.5" fill="#2c4419" opacity="0.68"/><ellipse cx="13.7" cy="114.9" rx="3.5" ry="3.8" fill="#34521f" opacity="0.68"/><ellipse cx="81.2" cy="94.8" rx="5.1" ry="3.2" fill="#34521f" opacity="0.41"/><ellipse cx="168.5" cy="111.8" rx="7.1" ry="3.9" fill="#6a9445" opacity="0.43"/><ellipse cx="180.9" cy="102.1" rx="6.9" ry="3.5" fill="#6a9445" opacity="0.42"/><ellipse cx="158.1" cy="94.7" rx="3.3" ry="2.1" fill="#6a9445" opacity="0.54"/></g><g filter="url(#fblur2)"><path d="M18.5 0 H31 L27.5 86 H9.6Z" fill="url(#trkA)"/><path d="M69 0 H75 L74 93 H70Z" fill="#25271f"/><path d="M88 0 H109 L107.5 93 H85.5Z" fill="url(#trkB)"/><path d="M119.5 0 H147.7 L152 121 H113.5Z" fill="url(#trkC)"/><path d="M173.7 0 H180 L179 82 H174.5Z" fill="#283020"/><path d="M187.8 0 H205.6 V121 H179.6Z" fill="url(#trkD)"/><rect x="205.6" y="0" width="4.4" height="121" fill="#33402a"/></g><g filter="url(#fblur2)" opacity=".5"><path d="M14.7 7.9 V85.2" stroke="#2a1810" stroke-width="0.74" opacity="0.79"/><path d="M13.5 5.2 V84.7" stroke="#a07a60" stroke-width="0.80" opacity="0.34"/><path d="M20.1 25.4 V79.4" stroke="#2a1810" stroke-width="1.11" opacity="0.67"/><path d="M13.9 8.0 V83.5" stroke="#3a2216" stroke-width="1.07" opacity="0.44"/><path d="M16.5 4.6 V77.2" stroke="#2a1810" stroke-width="0.75" opacity="0.42"/><path d="M22.3 7.4 V80.7" stroke="#3a2216" stroke-width="0.66" opacity="0.43"/><path d="M23.6 3.1 V81.3" stroke="#3a2216" stroke-width="0.48" opacity="0.80"/><path d="M26.6 8.8 V84.8" stroke="#3a2216" stroke-width="1.07" opacity="0.32"/><path d="M15.2 2.3 V80.9" stroke="#a07a60" stroke-width="1.18" opacity="0.19"/><path d="M91.4 3.2 V87.0" stroke="#a07a60" stroke-width="0.88" opacity="0.34"/><path d="M100.2 1.3 V83.0" stroke="#3a2216" stroke-width="0.57" opacity="0.47"/><path d="M88.6 24.6 V88.9" stroke="#2a1810" stroke-width="0.99" opacity="0.71"/><path d="M95.3 23.9 V87.5" stroke="#2a1810" stroke-width="0.90" opacity="0.40"/><path d="M89.1 4.6 V87.7" stroke="#3a2216" stroke-width="0.48" opacity="0.63"/><path d="M100.9 8.5 V89.9" stroke="#3a2216" stroke-width="0.72" opacity="0.50"/><path d="M106.9 12.4 V92.8" stroke="#a07a60" stroke-width="0.65" opacity="0.33"/><path d="M103.2 21.8 V91.0" stroke="#a07a60" stroke-width="1.04" opacity="0.19"/><path d="M88.0 2.7 V87.2" stroke="#3a2216" stroke-width="1.12" opacity="0.36"/><path d="M95.1 16.5 V86.6" stroke="#2a1810" stroke-width="1.02" opacity="0.31"/><path d="M147.1 22.1 V119.3" stroke="#a07a60" stroke-width="0.47" opacity="0.34"/><path d="M128.7 3.3 V116.1" stroke="#2a1810" stroke-width="0.53" opacity="0.76"/><path d="M143.7 25.1 V120.6" stroke="#2a1810" stroke-width="1.17" opacity="0.45"/><path d="M147.2 11.6 V112.0" stroke="#a07a60" stroke-width="0.65" opacity="0.34"/><path d="M137.7 25.7 V114.8" stroke="#2a1810" stroke-width="1.06" opacity="0.62"/><path d="M137.5 6.5 V117.0" stroke="#3a2216" stroke-width="0.56" opacity="0.39"/><path d="M134.3 29.1 V112.8" stroke="#2a1810" stroke-width="0.71" opacity="0.37"/><path d="M123.7 25.1 V119.8" stroke="#a07a60" stroke-width="1.11" opacity="0.16"/><path d="M137.0 19.5 V117.9" stroke="#a07a60" stroke-width="0.84" opacity="0.31"/><path d="M125.5 13.2 V120.8" stroke="#3a2216" stroke-width="0.71" opacity="0.52"/><path d="M137.6 18.6 V112.8" stroke="#2a1810" stroke-width="0.79" opacity="0.52"/><path d="M144.7 3.9 V116.7" stroke="#3a2216" stroke-width="1.05" opacity="0.35"/><path d="M120.4 1.2 V119.7" stroke="#a07a60" stroke-width="0.75" opacity="0.28"/><path d="M147.5 1.6 V116.0" stroke="#a07a60" stroke-width="0.65" opacity="0.25"/><path d="M129.7 2.0 V114.9" stroke="#2a1810" stroke-width="1.16" opacity="0.31"/><path d="M140.0 14.8 V111.4" stroke="#2a1810" stroke-width="0.49" opacity="0.79"/><path d="M147.3 2.0 V117.5" stroke="#a07a60" stroke-width="0.53" opacity="0.34"/><path d="M198.9 24.5 V119.6" stroke="#a07a60" stroke-width="0.53" opacity="0.20"/><path d="M193.3 18.5 V118.6" stroke="#2a1810" stroke-width="1.14" opacity="0.60"/><path d="M190.4 28.1 V114.2" stroke="#3a2216" stroke-width="0.56" opacity="0.38"/><path d="M202.0 15.9 V114.6" stroke="#3a2216" stroke-width="0.53" opacity="0.36"/><path d="M190.2 20.7 V112.0" stroke="#a07a60" stroke-width="1.10" opacity="0.25"/><path d="M187.8 11.1 V117.2" stroke="#3a2216" stroke-width="0.83" opacity="0.67"/><path d="M190.4 13.3 V119.2" stroke="#3a2216" stroke-width="0.52" opacity="0.68"/><path d="M198.6 19.2 V111.2" stroke="#a07a60" stroke-width="0.44" opacity="0.20"/><path d="M195.1 22.4 V118.8" stroke="#3a2216" stroke-width="0.93" opacity="0.67"/><path d="M188.6 26.9 V119.7" stroke="#3a2216" stroke-width="0.90" opacity="0.56"/><path d="M187.2 17.0 V118.0" stroke="#2a1810" stroke-width="0.92" opacity="0.33"/></g><g filter="url(#fblur)"><ellipse cx="98.7" cy="93.4" rx="3.1" ry="3.2" fill="#5f8a3a" opacity="0.56"/><ellipse cx="108.1" cy="85.5" rx="4.6" ry="3.1" fill="#5f8a3a" opacity="0.64"/><ellipse cx="172.6" cy="98.3" rx="3.8" ry="2.5" fill="#6a8a45" opacity="0.67"/><ellipse cx="10.0" cy="90.5" rx="2.5" ry="3.3" fill="#5f8a3a" opacity="0.54"/><ellipse cx="103.0" cy="87.2" rx="4.4" ry="1.8" fill="#6a8a45" opacity="0.61"/><ellipse cx="81.7" cy="95.4" rx="3.1" ry="2.4" fill="#4f7030" opacity="0.82"/><ellipse cx="7.4" cy="88.2" rx="2.4" ry="3.3" fill="#4f7030" opacity="0.82"/><ellipse cx="151.8" cy="92.9" rx="4.1" ry="3.3" fill="#6a8a45" opacity="0.84"/><ellipse cx="13.9" cy="98.1" rx="2.5" ry="3.3" fill="#4f7030" opacity="0.79"/><ellipse cx="11.1" cy="98.1" rx="3.8" ry="2.3" fill="#3a5a25" opacity="0.80"/><ellipse cx="179.5" cy="91.5" rx="4.6" ry="2.4" fill="#4f7030" opacity="0.75"/><ellipse cx="157.4" cy="93.4" rx="2.4" ry="1.6" fill="#5f8a3a" opacity="0.54"/><ellipse cx="32.9" cy="84.5" rx="4.1" ry="2.8" fill="#5f8a3a" opacity="0.74"/><ellipse cx="82.3" cy="87.2" rx="4.6" ry="3.0" fill="#4f7030" opacity="0.75"/><ellipse cx="16.5" cy="84.6" rx="4.5" ry="2.8" fill="#4f7030" opacity="0.60"/><ellipse cx="8.0" cy="88.7" rx="3.3" ry="1.5" fill="#3a5a25" opacity="0.59"/><ellipse cx="105.1" cy="96.3" rx="4.6" ry="2.7" fill="#6a8a45" opacity="0.51"/><ellipse cx="95.3" cy="91.5" rx="3.6" ry="1.9" fill="#4f7030" opacity="0.80"/><ellipse cx="7.7" cy="92.4" rx="4.3" ry="3.5" fill="#3a5a25" opacity="0.50"/><ellipse cx="19.7" cy="99.5" rx="4.9" ry="2.5" fill="#3a5a25" opacity="0.70"/><ellipse cx="9.8" cy="92.0" rx="4.8" ry="3.0" fill="#4f7030" opacity="0.67"/><ellipse cx="99.6" cy="89.7" rx="4.8" ry="3.3" fill="#6a8a45" opacity="0.76"/><ellipse cx="102.6" cy="88.2" rx="3.1" ry="3.3" fill="#5f8a3a" opacity="0.58"/><ellipse cx="176.4" cy="94.3" rx="3.7" ry="2.5" fill="#3a5a25" opacity="0.80"/><ellipse cx="99.4" cy="91.0" rx="3.7" ry="1.8" fill="#3a5a25" opacity="0.66"/><ellipse cx="88.3" cy="96.1" rx="4.2" ry="3.4" fill="#5f8a3a" opacity="0.75"/><ellipse cx="23.1" cy="88.1" rx="2.5" ry="2.8" fill="#4f7030" opacity="0.57"/><ellipse cx="85.2" cy="91.0" rx="2.3" ry="3.3" fill="#5f8a3a" opacity="0.60"/><ellipse cx="96.2" cy="95.1" rx="3.4" ry="1.8" fill="#3a5a25" opacity="0.71"/><ellipse cx="105.9" cy="95.2" rx="4.5" ry="2.8" fill="#6a8a45" opacity="0.73"/></g></symbol></svg><div style="position:absolute;left:742px;top:239.3px;width:222.4px;height:132.5px;background:#141414;border-radius:4px;"></div><svg style="position:absolute;left:748.2px;top:245px" width="210.3" height="121" viewBox="0 0 210 121"><use href="#forest" width="210" height="121"/></svg><svg style="position:absolute;left:815px;top:371px" width="78" height="10"><defs><linearGradient id="stand" x1="0" y1="0" x2="0" y2="1"><stop offset="0" stop-color="#5a5a5a"/><stop offset=".5" stop-color="#d8d8d8"/><stop offset="1" stop-color="#9a9a9a"/></linearGradient></defs><path d="M2 1 H76 Q70 8 39 8.3 Q8 8 2 1Z" fill="url(#stand)"/></svg><div style="position:absolute;left:1009.8px;top:265.2px;width:145px;height:99px;background:#0b0b0b;border:1px solid #8a8a8a;border-bottom:none;border-radius:5px 5px 0 0;"></div><svg style="position:absolute;left:1013px;top:268px" width="141.6" height="90.6" viewBox="0 0 141.6 90.6" preserveAspectRatio="none"><svg viewBox="10.5 0 189 121" width="141.6" height="90.6" preserveAspectRatio="none" overflow="hidden"><use href="#forest" width="210" height="121"/></svg><rect x="61.5" y="0" width="18.5" height="3.8" rx="1.5" fill="#000"/></svg><svg style="position:absolute;left:988px;top:364px" width="192" height="15"><defs><linearGradient id="base" x1="0" y1="0" x2="0" y2="1"><stop offset="0" stop-color="#2a2a2a"/><stop offset=".3" stop-color="#4a4a4a"/><stop offset=".65" stop-color="#303030"/><stop offset="1" stop-color="#141414"/></linearGradient><linearGradient id="basex" x1="0" y1="0" x2="1" y2="0"><stop offset="0" stop-color="#777" stop-opacity=".6"/><stop offset=".03" stop-color="#777" stop-opacity="0"/><stop offset=".97" stop-color="#777" stop-opacity="0"/><stop offset="1" stop-color="#777" stop-opacity=".6"/></linearGradient></defs><path d="M1 2.5 H191 V9.5 Q191 12.8 187 13.2 H5 Q1 12.8 1 9.5Z" fill="url(#base)"/><path d="M1 2.5 H191 V9.5 Q191 12.8 187 13.2 H5 Q1 12.8 1 9.5Z" fill="url(#basex)"/><rect x="19" y="1.5" width="154" height="2.2" fill="#0a0a0a"/><path d="M80 4 H111" stroke="#5a5a5a" stroke-width="0.8"/><path d="M5 12.6 H187" stroke="#555" stroke-width="0.6"/></svg><div class="t" style="left:755.00px;top:399.69px;font-size:26px;line-height:26px;color:#e2e2e1;font-weight:400;letter-spacing:0.487px;-webkit-text-stroke-width:1.4px;">VX2776-4K-mhd</div><div class="t" style="left:993.00px;top:399.69px;font-size:26px;line-height:26px;color:#e2e2e1;font-weight:400;letter-spacing:0.450px;-webkit-text-stroke-width:1.4px;">Built-in Display</div><div style="position:absolute;left:542px;top:395px;width:140px;height:38px;border-radius:8px;background:#676766;box-shadow:inset 0 1px 0 rgba(255,255,255,.13), 0 1px 1px rgba(0,0,0,.3)"></div><div class="t" style="left:558.00px;top:401.56px;font-size:24.5px;line-height:24.5px;color:#e6e6e6;font-weight:400;letter-spacing:0.136px;-webkit-text-stroke-width:0.4px;">Arrange...</div><div style="position:absolute;box-sizing:border-box;left:542px;top:498px;width:853px;height:338px;border:1px solid #4a4947;border-radius:10px;background:#2c2b29;"></div><div style="position:absolute;box-sizing:border-box;left:542px;top:873px;width:853px;height:67px;border:1px solid #4a4947;border-radius:10px;background:#2c2b29;"></div><div style="position:absolute;box-sizing:border-box;left:542px;top:959px;width:853px;height:164px;border:1px solid #4a4947;border-radius:10px;background:#2c2b29;"></div><div style="position:absolute;box-sizing:border-box;left:542px;top:1142px;width:853px;height:159px;border:1px solid #4a4947;border-radius:10px;background:#2c2b29;"></div><div class="t" style="left:560.90px;top:519.64px;font-size:25px;line-height:25px;color:#e6e6e6;font-weight:400;letter-spacing:-0.442px;-webkit-text-stroke-width:0.4px;">Use as</div><div class="t" style="left:1196.20px;top:519.54px;font-size:25px;line-height:25px;color:#e6e6e6;font-weight:400;letter-spacing:0.032px;-webkit-text-stroke-width:0.4px;">Main display</div><svg style="position:absolute;left:1343px;top:518px" width="30" height="30"><rect x="0" y="0" width="30" height="30" rx="6.5" fill="#454442"/><path d="M9.2 11.8 L14.8 6.2 L20.4 11.8 M9.2 18.2 L14.8 23.8 L20.4 18.2" fill="none" stroke="#ececec" stroke-width="2.5" stroke-linecap="round" stroke-linejoin="round"/></svg><div style="position:absolute;left:561px;top:565px;width:815px;height:1px;background:#3f3e3c;"></div><div class="t" style="left:561.00px;top:587.94px;font-size:25px;line-height:25px;color:#e6e6e6;font-weight:400;letter-spacing:0.288px;-webkit-text-stroke-width:0.4px;">Optimize for</div><div class="t" style="left:1148.50px;top:588.04px;font-size:25px;line-height:25px;color:#e6e6e6;font-weight:400;letter-spacing:0.298px;-webkit-text-stroke-width:0.4px;">VX2776-4K-mhd</div><svg style="position:absolute;left:1343px;top:587px" width="30" height="30"><rect x="0" y="0" width="30" height="30" rx="6.5" fill="#454442"/><path d="M9.2 11.8 L14.8 6.2 L20.4 11.8 M9.2 18.2 L14.8 23.8 L20.4 18.2" fill="none" stroke="#ececec" stroke-width="2.5" stroke-linecap="round" stroke-linejoin="round"/></svg><div style="position:absolute;left:561px;top:633px;width:815px;height:1px;background:#3f3e3c;"></div><div style="position:absolute;left:591.3px;top:672.1px;width:84.10000000000002px;height:83.79999999999995px;border:3px solid #4d8de2;border-radius:12px;"></div><div style="position:absolute;left:595.8px;top:676.6px;width:81.10000000000002px;height:80.79999999999995px;border-radius:8px;background:#2a2a29;overflow:hidden;box-shadow:0 0 0 1px #1c1c1b, 0 1px 3px rgba(0,0,0,.4)"><div style="position:absolute;left:0;top:0;width:81.10000000000002px;height:39.299999999999955px;background:#2e2e2d;border-bottom:1px solid #191918"></div><div style="position:absolute;left:13.7px;top:8.3px;width:23px;height:23px;border-radius:50%;background:#ee6a5f"></div><div style="position:absolute;left:51.0px;top:8.3px;width:23px;height:23px;border-radius:50%;background:#e6c24a"></div><div style="position:absolute;left:88.3px;top:8.3px;width:23px;height:23px;border-radius:50%;background:#61c554"></div><div style="position:absolute;left:13.200000000000045px;top:49.6px;width:181.10000000000002px;font-family:'Liberation Sans',sans-serif;font-size:22.6px;line-height:24px;color:#dadad9;white-space:pre;">Here’s</div></div><div style="position:absolute;left:762px;top:675.8px;width:81px;height:82.5px;border-radius:8px;background:#2a2a29;overflow:hidden;box-shadow:0 0 0 1px #1c1c1b, 0 1px 3px rgba(0,0,0,.4)"><div style="position:absolute;left:0;top:0;width:81px;height:32.90000000000009px;background:#2e2e2d;border-bottom:1px solid #191918"></div><div style="position:absolute;left:10.5px;top:6.8px;width:19px;height:19px;border-radius:50%;background:#ee6a5f"></div><div style="position:absolute;left:42.0px;top:6.8px;width:19px;height:19px;border-radius:50%;background:#e6c24a"></div><div style="position:absolute;left:73.5px;top:6.8px;width:19px;height:19px;border-radius:50%;background:#61c554"></div><div style="position:absolute;left:10px;top:42.3px;width:181px;font-family:'Liberation Sans',sans-serif;font-size:18.5px;line-height:21px;color:#dadad9;white-space:pre;">Here’s to the
troublemakers</div></div><div style="position:absolute;left:928px;top:676.4px;width:82px;height:81.60000000000002px;border-radius:8px;background:#2a2a29;overflow:hidden;box-shadow:0 0 0 1px #1c1c1b, 0 1px 3px rgba(0,0,0,.4)"><div style="position:absolute;left:0;top:0;width:82px;height:26.600000000000023px;background:#2e2e2d;border-bottom:1px solid #191918"></div><div style="position:absolute;left:8.5px;top:5.8px;width:15.7px;height:15.7px;border-radius:50%;background:#ee6a5f"></div><div style="position:absolute;left:32.5px;top:5.8px;width:15.7px;height:15.7px;border-radius:50%;background:#e6c24a"></div><div style="position:absolute;left:56.5px;top:5.8px;width:15.7px;height:15.7px;border-radius:50%;background:#61c554"></div><div style="position:absolute;left:7px;top:33.2px;width:182px;font-family:'Liberation Sans',sans-serif;font-size:16px;line-height:17.7px;color:#dadad9;white-space:pre;">Here’s to the
troublemakers
ones who see</div></div><div style="position:absolute;left:1094.3px;top:676px;width:81.70000000000005px;height:81.60000000000002px;border-radius:8px;background:#2a2a29;overflow:hidden;box-shadow:0 0 0 1px #1c1c1b, 0 1px 3px rgba(0,0,0,.4)"><div style="position:absolute;left:0;top:0;width:81.70000000000005px;height:20.399999999999977px;background:#2e2e2d;border-bottom:1px solid #191918"></div><div style="position:absolute;left:7.1px;top:4.9px;width:11.2px;height:11.2px;border-radius:50%;background:#ee6a5f"></div><div style="position:absolute;left:25.6px;top:4.9px;width:11.2px;height:11.2px;border-radius:50%;background:#e6c24a"></div><div style="position:absolute;left:44.1px;top:4.9px;width:11.2px;height:11.2px;border-radius:50%;background:#61c554"></div><div style="position:absolute;left:6.2000000000000455px;top:24.3px;width:181.70000000000005px;font-family:'Liberation Sans',sans-serif;font-size:11.6px;line-height:13.8px;color:#dadad9;white-space:pre;">Here’s to the crazy
troublemakers. The
ones who see things
rules. And they have</div></div><div style="position:absolute;left:1260.4px;top:676px;width:81.29999999999995px;height:81.60000000000002px;border-radius:8px;background:#2a2a29;overflow:hidden;box-shadow:0 0 0 1px #1c1c1b, 0 1px 3px rgba(0,0,0,.4)"><div style="position:absolute;left:0;top:0;width:81.29999999999995px;height:12.5px;background:#2e2e2d;border-bottom:1px solid #191918"></div><div style="position:absolute;left:4.3px;top:2.6px;width:8px;height:8px;border-radius:50%;background:#ee6a5f"></div><div style="position:absolute;left:16.3px;top:2.6px;width:8px;height:8px;border-radius:50%;background:#e6c24a"></div><div style="position:absolute;left:28.3px;top:2.6px;width:8px;height:8px;border-radius:50%;background:#61c554"></div><div style="position:absolute;left:4.599999999999909px;top:14.9px;width:181.29999999999995px;font-family:'Liberation Sans',sans-serif;font-size:7.6px;line-height:9.24px;color:#dadad9;white-space:pre;">Here’s to the crazy ones
troublemakers. The round
ones who see things differ
rules. And they have no re
can quote them, disagree
them. About the only thing
Because they change thing</div></div><div class="t" style="left:580.50px;top:775.42px;font-size:21px;line-height:21px;color:#e2e2e1;font-weight:400;letter-spacing:0.458px;-webkit-text-stroke-width:0.4px;">Larger Text</div><div class="t" style="left:1242.50px;top:775.12px;font-size:21px;line-height:21px;color:#e2e2e1;font-weight:400;letter-spacing:0.251px;-webkit-text-stroke-width:0.4px;">More Space</div><div style="position:absolute;left:727px;top:783.5px;width:460px;height:2px;background:linear-gradient(90deg,#5c5b59 0%,#555452 50%,rgba(85,84,82,0) 100%)"></div><div class="t" style="left:560.60px;top:894.34px;font-size:25px;line-height:25px;color:#e6e6e6;font-weight:400;letter-spacing:0.310px;-webkit-text-stroke-width:0.4px;">Color profile</div><div class="t" style="left:1148.50px;top:894.44px;font-size:25px;line-height:25px;color:#e6e6e6;font-weight:400;letter-spacing:0.298px;-webkit-text-stroke-width:0.4px;">VX2776-4K-mhd</div><svg style="position:absolute;left:1343px;top:893px" width="30" height="30"><rect x="0" y="0" width="30" height="30" rx="6.5" fill="#454442"/><path d="M9.2 11.8 L14.8 6.2 L20.4 11.8 M9.2 18.2 L14.8 23.8 L20.4 18.2" fill="none" stroke="#ececec" stroke-width="2.5" stroke-linecap="round" stroke-linejoin="round"/></svg><div class="t" style="left:559.60px;top:980.04px;font-size:25px;line-height:25px;color:#e6e6e6;font-weight:400;letter-spacing:0.113px;-webkit-text-stroke-width:0.4px;">Refresh rate</div><div class="t" style="left:1237.70px;top:980.24px;font-size:25px;line-height:25px;color:#e6e6e6;font-weight:400;letter-spacing:0.631px;-webkit-text-stroke-width:0.4px;">60 Hertz</div><svg style="position:absolute;left:1343px;top:979px" width="30" height="30"><rect x="0" y="0" width="30" height="30" rx="6.5" fill="#454442"/><path d="M9.2 11.8 L14.8 6.2 L20.4 11.8 M9.2 18.2 L14.8 23.8 L20.4 18.2" fill="none" stroke="#ececec" stroke-width="2.5" stroke-linecap="round" stroke-linejoin="round"/></svg><div style="position:absolute;left:561px;top:1026px;width:815px;height:1px;background:#3f3e3c;"></div><div class="t" style="left:559.60px;top:1048.44px;font-size:25px;line-height:25px;color:#e6e6e6;font-weight:400;letter-spacing:-0.066px;-webkit-text-stroke-width:0.4px;">High Dynamic Range</div><div class="t" style="left:561.60px;top:1080.42px;font-size:21px;line-height:21px;color:#a3a3a2;font-weight:400;letter-spacing:0.510px;-webkit-text-stroke-width:0.4px;">Automatically adjust the display to show high dynamic range content.</div><div style="position:absolute;left:1328px;top:1049.5px;width:46px;height:26px;border-radius:14px;background:#3f3e3c;border:1px solid #585755"></div><div style="position:absolute;left:1329.5px;top:1051px;width:25px;height:25px;border-radius:50%;background:#cfcfce"></div><div class="t" style="left:561.80px;top:1163.04px;font-size:25px;line-height:25px;color:#e6e6e6;font-weight:400;letter-spacing:0.093px;-webkit-text-stroke-width:0.4px;">When connected to TV</div><div class="t" style="left:1133.20px;top:1162.94px;font-size:25px;line-height:25px;color:#e6e6e6;font-weight:400;letter-spacing:-0.113px;-webkit-text-stroke-width:0.4px;">Ask What to Show</div><svg style="position:absolute;left:1343px;top:1162px" width="30" height="30"><rect x="0" y="0" width="30" height="30" rx="6.5" fill="#454442"/><path d="M9.2 11.8 L14.8 6.2 L20.4 11.8 M9.2 18.2 L14.8 23.8 L20.4 18.2" fill="none" stroke="#ececec" stroke-width="2.5" stroke-linecap="round" stroke-linejoin="round"/></svg><div class="t" style="left:560.80px;top:1196.02px;font-size:21px;line-height:21px;color:#a3a3a2;font-weight:400;letter-spacing:0.297px;-webkit-text-stroke-width:0.4px;">Choose what to show or use the TV as a</div><div class="t" style="left:562.60px;top:1224.52px;font-size:21px;line-height:21px;color:#a3a3a2;font-weight:400;letter-spacing:0.300px;-webkit-text-stroke-width:0.4px;">secondary display</div></div><div style="position:absolute;left:104px;top:71px;width:1325px;height:1158px;border:1px solid rgba(255,255,255,0.28);border-radius:16px;pointer-events:none;"></div><div style="position:absolute;left:138px;top:1229.6px;width:29px;height:1.4px;border-radius:1px;background:#ef8f88"></div>
</body></html>
